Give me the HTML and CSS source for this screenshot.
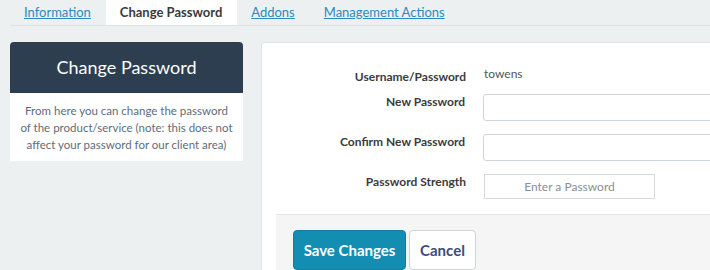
FILE: index.html
```html
<!DOCTYPE html>
<html lang="en">
<head>
    <meta charset="UTF-8">
    <meta name="viewport" content="width=device-width, initial-scale=1.0">
    <title>Change Password</title>
    <link rel="stylesheet" href="styles.css">
</head>
<body>
    <ul class="tabs">
        <li class="tab"><a href="#">Information</a></li>
        <li class="tab active"><a href="#">Change Password</a></li>
        <li class="tab"><a href="#">Addons</a></li>
        <li class="tab"><a href="#">Management Actions</a></li>
    </ul>

    <div class="content">
        <div class="sidebar">
            <div class="sidebar-header">Change Password</div>
            <div class="sidebar-body">
                From here you can change the password of the product/service (note: this does not affect your password for our client area)
            </div>
        </div>

        <div class="panel">
            <form class="form">
                <div class="row row-first">
                    <label class="label">Username/Password</label>
                    <div class="value">towens</div>
                </div>
                <div class="row">
                    <label class="label">New Password</label>
                    <input class="input" type="password">
                </div>
                <div class="row">
                    <label class="label">Confirm New Password</label>
                    <input class="input" type="password">
                </div>
                <div class="row">
                    <label class="label">Password Strength</label>
                    <div class="strength">Enter a Password</div>
                </div>
            </form>
            <div class="footer">
                <button class="button button-primary">Save Changes</button>
                <button class="button button-default">Cancel</button>
            </div>
        </div>
    </div>
</body>
</html>
```

FILE: styles.css
```css
body {
    margin: 0;
    padding: 0;
    height: 270px;
    background-color: #ecf0f1;
    font-family: Lato, 'Open Sans', Arial, sans-serif;
    color: #333;
    overflow: hidden;
}

/* Tabs */
.tabs {
    display: flex;
    list-style: none;
    margin: 0 0 0 10px;
    padding: 0;
    height: 25px;
    border-bottom: 1px solid #dde3e5;
}
.tab {
    padding: 4px 15px 0 14px;
    font-size: 13px;
}
.tab a {
    color: #2a8bbd;
    text-decoration: underline;
}
.tab.active {
    background-color: #fff;
}
.tab.active a {
    color: #3a3a3a;
    font-weight: bold;
    text-decoration: none;
}

.content {
    display: flex;
    gap: 18px;
    padding: 16px 0 0 10px;
}

/* Sidebar */
.sidebar {
    width: 233px;
    flex-shrink: 0;
}
.sidebar-header {
    background-color: #2c3e50;
    color: #fff;
    font-size: 18px;
    text-align: center;
    height: 51px;
    line-height: 51px;
    border-radius: 4px 4px 0 0;
}
.sidebar-body {
    background-color: #fff;
    color: #5d6d7b;
    font-size: 11.5px;
    line-height: 17px;
    text-align: center;
    padding: 9px 9px 8px;
}

/* Main panel */
.panel {
    width: 520px;
    flex-shrink: 0;
    background-color: #fff;
    border: 1px solid #dfe5e7;
    border-radius: 3px;
}
.form {
    padding: 26px 0 15px;
}
.row {
    display: flex;
    gap: 18px;
    margin-bottom: 13px;
}
.row-first {
    margin-bottom: 9px;
}
.row:last-child {
    margin-bottom: 0;
}
.label {
    width: 204px;
    text-align: right;
    font-size: 12px;
    font-weight: bold;
    line-height: 16px;
    color: #3b3b3b;
}
.value {
    font-size: 12px;
    line-height: 14px;
    color: #555;
    margin-top: -2px;
}
.input {
    width: 300px;
    height: 27px;
    box-sizing: border-box;
    border: 1px solid #ccd6d9;
    border-radius: 3px;
    padding: 0 8px;
    margin: 0;
}
.strength {
    width: 171px;
    height: 25px;
    box-sizing: border-box;
    border: 1px solid #d5dadc;
    font-size: 12px;
    line-height: 23px;
    text-align: center;
    color: #8a8f93;
}

/* Footer */
.footer {
    margin-left: 14px;
    background-color: #f5f5f5;
    border-top: 1px solid #e3e6e7;
    padding: 15px 0 15px 17px;
    display: flex;
    gap: 3px;
}
.button {
    font-family: Lato, 'Open Sans', Arial, sans-serif;
    font-size: 15px;
    font-weight: bold;
    height: 40px;
    padding: 0;
    white-space: nowrap;
    border-radius: 4px;
    cursor: pointer;
}
.button-primary {
    background-color: #138db2;
    border: 1px solid #107fa0;
    color: #fff;
    width: 113px;
}
.button-default {
    background-color: #fff;
    border: 1px solid #cfd5d8;
    color: #3e4c78;
    width: 67px;
}
```
